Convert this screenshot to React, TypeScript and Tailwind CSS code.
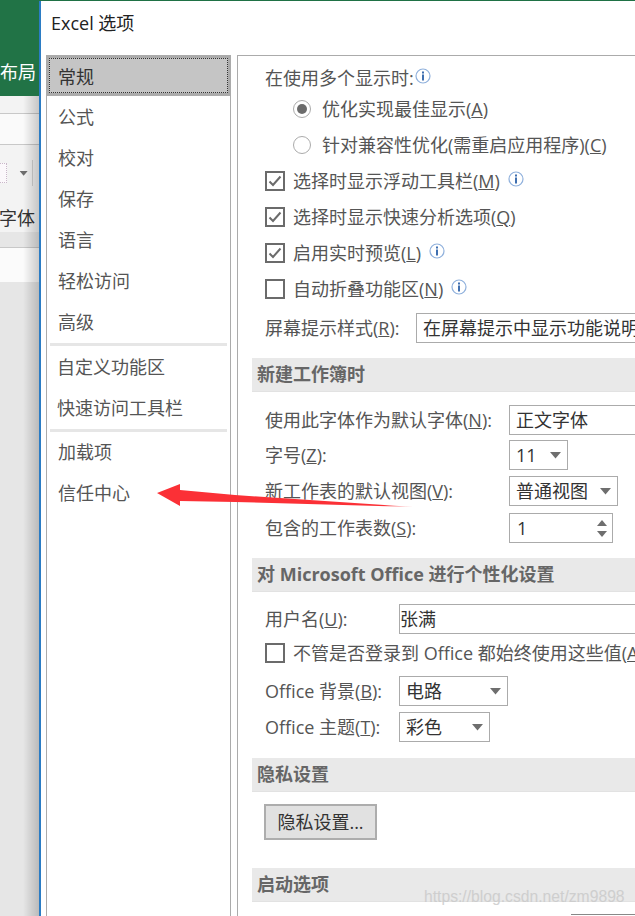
import type { ReactNode } from "react";

const FONT = "font-['Open_Sans','Noto_Sans_CJK_SC',sans-serif]";

function Info() {
  return (
    <svg width="16" height="16" viewBox="0 0 16 16" className="shrink-0 mb-[5px]">
      <circle cx="8" cy="8" r="7" fill="#fff" stroke="#8fb0dc" strokeWidth="1.2" />
      <rect x="7" y="3.5" width="2" height="2" fill="#3f6fb0" />
      <rect x="7" y="6.5" width="2" height="6" fill="#3f6fb0" />
    </svg>
  );
}

function Caret({ className = "" }: { className?: string }) {
  return (
    <svg width="12" height="7" viewBox="0 0 12 7" className={`shrink-0 ${className}`}>
      <path d="M0 0h11L5.5 6.5z" fill="#6e6e6e" />
    </svg>
  );
}

function Check({ on }: { on?: boolean }) {
  return (
    <span className="w-5 h-5 shrink-0 border-2 border-[#6b6b6b] bg-white flex items-center justify-center">
      {on && (
        <svg width="14" height="12" viewBox="0 0 14 12">
          <path d="M1.5 6.5 5 10l7.5-8.5" fill="none" stroke="#6b6b6b" strokeWidth="2" />
        </svg>
      )}
    </span>
  );
}

function Radio({ on }: { on?: boolean }) {
  return (
    <span className="w-[18px] h-[18px] shrink-0 rounded-full border border-[#ababab] bg-white flex items-center justify-center">
      {on && <span className="w-[10px] h-[10px] rounded-full bg-[#6b6b6b]" />}
    </span>
  );
}

function Section({ children, className = "" }: { children: ReactNode; className?: string }) {
  return (
    <div className={`h-[34px] ml-[14px] pl-[5px] shrink-0 bg-[#e9e9e9] border-b border-[#e2e2e2] flex items-center font-bold text-[18px] text-[#666] whitespace-nowrap ${className}`}>
      {children}
    </div>
  );
}

function Row({ children, className = "" }: { children: ReactNode; className?: string }) {
  return (
    <div className={`h-7 ml-[27px] shrink-0 flex items-center whitespace-nowrap leading-7 ${className}`}>
      {children}
    </div>
  );
}

function Box({ children, className = "" }: { children: ReactNode; className?: string }) {
  return (
    <div className={`h-[30px] shrink-0 bg-white border border-[#ababab] flex items-center text-[#333] whitespace-nowrap overflow-hidden ${className}`}>
      {children}
    </div>
  );
}

function NavItem({ label, className = "pt-[2px]" }: { label: string; className?: string }) {
  return (
    <div className={`h-[41px] pl-[11px] flex items-center text-[18px] text-[#555] whitespace-nowrap ${className}`}>
      {label}
    </div>
  );
}

export default function App() {
  return (
    <div className={`relative w-[635px] h-[916px] overflow-hidden flex bg-[#1f7145] ${FONT}`}>
      {/* excel window behind the dialog */}
      <div className="relative w-[39px] shrink-0 flex flex-col overflow-hidden">
        <div className="h-[96px] shrink-0 bg-[#217346] flex items-end pb-[10px] text-[18px] text-white whitespace-nowrap">
          <span className="leading-7">布局</span>
        </div>
        <div className="h-[18px] shrink-0 bg-[#f3f3f3] border-b border-[#c8c8c8]" />
        <div className="h-[31px] shrink-0 bg-[#fafafa] border-b border-[#c8c8c8]" />
        <div className="h-[87px] shrink-0 bg-[#f3f3f3] flex flex-col">
          <div className="h-[56px] shrink-0 flex items-center">
            <span className="w-[7px] h-5 border border-dotted border-l-0 border-[#c9b8c9] bg-[#fbf8fb]" />
            <Caret className="ml-[11px] scale-75" />
            <span className="ml-[2px] w-px h-[26px] bg-[#d0d0d0]" />
          </div>
          <span className="mt-[5px] text-[18px] leading-6 text-[#333] -ml-[1px] whitespace-nowrap">字体</span>
        </div>
        <div className="h-[16px] shrink-0 bg-[#e6e6e6] border-b border-[#c8c8c8]" />
        <div className="h-[34px] shrink-0 bg-[#fbfbfb]" />
        <div className="flex-1 bg-[#e6e6e6]" />
        <div className="absolute inset-y-[96px] right-0 w-[16px] bottom-0 bg-gradient-to-r from-transparent to-[#00000030]" />
      </div>

      {/* dialog */}
      <div className="flex-1 min-w-0 mt-px bg-white border-l-2 border-[#2b7cc4] flex flex-col">
        <div className="h-[54px] shrink-0 pl-[10px] pt-[8px] text-[18px] leading-7 text-[#222] whitespace-nowrap">
          Excel 选项
        </div>
        <div className="flex-1 min-h-0 pl-[5px] flex gap-[6px]">
          {/* side nav */}
          <div className="w-[185px] shrink-0 border-x border-[#ababab]">
            <div className="-mx-px h-[41px] bg-[#c5c5c5] border-[3px] border-[#ababab] flex items-center">
              <div className="w-full h-full border border-dotted border-[#333] pl-[8px] pt-[3px] flex items-center text-[18px] text-[#333]">
                常规
              </div>
            </div>
            <NavItem label="公式" />
            <NavItem label="校对" />
            <NavItem label="保存" />
            <NavItem label="语言" />
            <NavItem label="轻松访问" />
            <NavItem label="高级" />
            <div className="mx-[3px] mt-[1px] h-[3px] bg-[#e6e6e6]" />
            <NavItem label="自定义功能区" className="mt-[1px] -ml-px" />
            <NavItem label="快速访问工具栏" className="-ml-px" />
            <div className="mx-[3px] h-[3px] bg-[#e6e6e6]" />
            <NavItem label="加载项" className="pb-[2px] mt-[1px]" />
            <NavItem label="信任中心" className="pb-[2px]" />
          </div>

          {/* options pane */}
          <div className="flex-1 min-w-0 border-l border-t border-[#ababab] flex flex-col text-[18px] text-[#555] overflow-hidden">
            <Row className="mt-2 gap-px">
              在使用多个显示时:<Info />
            </Row>
            <Row className="mt-[3px] pl-[28px] gap-[11px]">
              <Radio on />
              <span>优化实现最佳显示(<u>A</u>)</span>
            </Row>
            <Row className="mt-[8px] pl-[28px] gap-[11px]">
              <Radio />
              <span>针对兼容性优化(需重启应用程序)(<u>C</u>)</span>
            </Row>
            <Row className="mt-2 gap-[8px]">
              <Check on />
              <span>选择时显示浮动工具栏(<u>M</u>)</span>
              <Info />
            </Row>
            <Row className="mt-2 gap-[8px]">
              <Check on />
              <span>选择时显示快速分析选项(<u>Q</u>)</span>
            </Row>
            <Row className="mt-2 gap-[8px]">
              <Check on />
              <span>启用实时预览(<u>L</u>)</span>
              <Info />
            </Row>
            <Row className="mt-2 gap-[8px]">
              <Check />
              <span>自动折叠功能区(<u>N</u>)</span>
              <Info />
            </Row>
            <Row className="mt-[11px]">
              <span className="w-[151px] shrink-0">屏幕提示样式(<u>R</u>):</span>
              <Box className="w-[260px] pl-[6px]">在屏幕提示中显示功能说明</Box>
            </Row>

            <Section className="mt-4">新建工作簿时</Section>
            <Row className="mt-[14px]">
              <span className="w-[244px] shrink-0">使用此字体作为默认字体(<u>N</u>):</span>
              <Box className="w-[180px] pl-[6px]">正文字体</Box>
            </Row>
            <Row className="mt-[7px]">
              <span className="w-[244px] shrink-0">字号(<u>Z</u>):</span>
              <Box className="w-[59px] pl-[6px] justify-between pr-[5px]">11<Caret /></Box>
            </Row>
            <Row className="mt-2">
              <span className="w-[244px] shrink-0">新工作表的默认视图(<u>V</u>):</span>
              <Box className="w-[109px] pl-[6px] justify-between pr-[5px]">普通视图<Caret /></Box>
            </Row>
            <Row className="mt-[9px]">
              <span className="w-[244px] shrink-0">包含的工作表数(<u>S</u>):</span>
              <Box className="w-[104px] pl-[7px] justify-between pr-[5px]">
                1
                <span className="flex flex-col gap-[5px]">
                  <svg width="10" height="6" viewBox="0 0 10 6"><path d="M0 6h10L5 0z" fill="#6e6e6e" /></svg>
                  <svg width="10" height="6" viewBox="0 0 10 6"><path d="M0 0h10L5 6z" fill="#6e6e6e" /></svg>
                </span>
              </Box>
            </Row>

            <Section className="mt-4">对 Microsoft Office 进行个性化设置</Section>
            <Row className="mt-[13px]">
              <span className="w-[134px] shrink-0">用户名(<u>U</u>):</span>
              <Box className="w-[260px] pl-0">张满</Box>
            </Row>
            <Row className="mt-[6px] gap-[8px]">
              <Check />
              <span>不管是否登录到 Office 都始终使用这些值(<u>A</u>)</span>
            </Row>
            <Row className="mt-[10px]">
              <span className="w-[134px] shrink-0">Office 背景(<u>B</u>):</span>
              <Box className="w-[109px] pl-[6px] justify-between pr-[5px]">电路<Caret /></Box>
            </Row>
            <Row className="mt-2">
              <span className="w-[134px] shrink-0">Office 主题(<u>T</u>):</span>
              <Box className="w-[91px] pl-[6px] justify-between pr-[5px]">彩色<Caret /></Box>
            </Row>

            <Section className="mt-[17px]">隐私设置</Section>
            <div className="mt-[12px] ml-[26px] w-[113px] h-9 shrink-0 bg-[#e1e1e1] border-2 border-[#adadad] flex items-center justify-center text-[#333] whitespace-nowrap">
              隐私设置...
            </div>
            <Section className="mt-[28px]">启动选项</Section>
          </div>
        </div>
      </div>

      {/* red annotation arrow */}
      <svg className="absolute left-[150px] top-[475px]" width="280" height="45" viewBox="0 0 280 45">
        <defs>
          <linearGradient id="arrowFade" x1="0" x2="1" y1="0" y2="0">
            <stop offset="0" stopColor="#fb3036" />
            <stop offset="0.88" stopColor="#fb3036" />
            <stop offset="1" stopColor="#fb3036" stopOpacity="0.1" />
          </linearGradient>
        </defs>
        <path d="M7 18 30 9 30 15 85 20 264 32 85 27 30 26 30 31z" fill="url(#arrowFade)" />
      </svg>

      {/* csdn watermark */}
      <span className="absolute left-[424px] top-[887px] text-[15.7px] leading-5 font-['Liberation_Sans',sans-serif] text-[#c8c8c8] opacity-80 whitespace-nowrap">
        https://blog.csdn.net/zm9898
      </span>
      <div className="absolute left-[571px] right-0 bottom-[1px] h-px bg-[#888]" />
    </div>
  );
}
